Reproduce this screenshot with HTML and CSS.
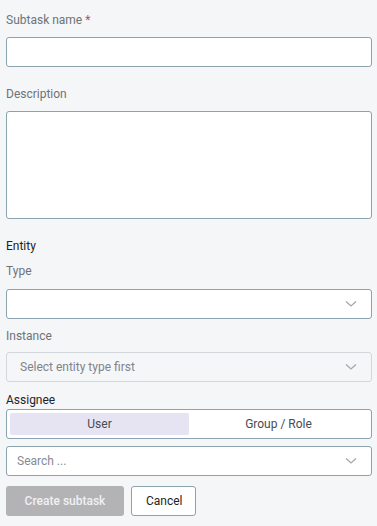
FILE: index.html
```html
<!DOCTYPE html>
<html>
<head>
<meta charset="utf-8">
<link rel="stylesheet" href="styles.css">
</head>
<body>
<form class="form">
  <label class="label first">Subtask name <span class="req">*</span></label>
  <div class="input"></div>

  <label class="label gap-lg">Description</label>
  <div class="textarea"></div>

  <div class="section">Entity</div>
  <label class="label sub">Type</label>
  <div class="input select">
    <span class="placeholder"></span>
    <svg class="chev" width="12" height="8" viewBox="0 0 12 8"><path d="M1 1.5 L6 6 L11 1.5" fill="none" stroke="#a3a8ad" stroke-width="1.3"/></svg>
  </div>

  <label class="label sub tight">Instance</label>
  <div class="input select disabled">
    <span class="placeholder">Select entity type first</span>
    <svg class="chev" width="12" height="8" viewBox="0 0 12 8"><path d="M1 1.5 L6 6 L11 1.5" fill="none" stroke="#a3a8ad" stroke-width="1.3"/></svg>
  </div>

  <div class="section assignee">Assignee</div>
  <div class="segmented">
    <div class="seg active">User</div>
    <div class="seg">Group / Role</div>
  </div>
  <div class="input select search">
    <span class="placeholder">Search ...</span>
    <svg class="chev" width="12" height="8" viewBox="0 0 12 8"><path d="M1 1.5 L6 6 L11 1.5" fill="none" stroke="#a3a8ad" stroke-width="1.3"/></svg>
  </div>

  <div class="actions">
    <button type="button" class="btn primary">Create subtask</button>
    <button type="button" class="btn secondary">Cancel</button>
  </div>
</form>
</body>
</html>
```
FILE: styles.css
```css
html, body {
  margin: 0;
  padding: 0;
  background: #f5f6f8;
}
body {
  font-family: Roboto, "Liberation Sans", sans-serif;
  font-size: 12px;
  color: #333;
}
.form {
  display: flex;
  flex-direction: column;
  padding: 12px 5px 0 6px;
}
.label {
  display: block;
  line-height: 16px;
  color: #6e7378;
  margin-bottom: 9px;
}
.label.gap-lg {
  margin-top: 19px;
}
.label.sub {
  margin-top: 9px;
  margin-bottom: 10px;
}
.label.sub.tight {
  margin-bottom: 8px;
}
.req {
  color: #c0504d;
}
.input {
  box-sizing: border-box;
  height: 30px;
  background: #fff;
  border: 1px solid #8aa3ae;
  border-radius: 3px;
}
.textarea {
  box-sizing: border-box;
  height: 108px;
  background: #fff;
  border: 1px solid #8aa3ae;
  border-radius: 3px;
}
.section {
  margin-top: 19px;
  line-height: 16px;
  color: #1f2328;
  font-weight: 400;
}
.select {
  display: flex;
  align-items: center;
  justify-content: space-between;
  padding: 0 14px 0 13px;
}
.placeholder {
  color: #868b92;
  font-size: 12px;
}
.chev {
  display: block;
}
.disabled {
  background: #f5f6f8;
  border-color: #d3d7db;
}
.disabled .placeholder {
  color: #7f848b;
}
.assignee {
  margin-top: 10px;
  margin-bottom: 1px;
}
.segmented {
  box-sizing: border-box;
  height: 30px;
  display: flex;
  padding: 3px;
  background: #fff;
  border: 1px solid #8aa3ae;
  border-radius: 3px;
}
.seg {
  flex: 1;
  display: flex;
  align-items: center;
  justify-content: center;
  color: #474c52;
  font-weight: 400;
  border-radius: 2px;
}
.seg.active {
  background: #e6e3f3;
}
.search {
  margin-top: 7px;
  padding-left: 10px;
}
.actions {
  display: flex;
  gap: 7px;
  margin-top: 10px;
}
.btn {
  box-sizing: border-box;
  height: 30px;
  font-family: inherit;
  font-size: 12px;
  font-weight: 400;
  border-radius: 3px;
  padding: 0 14px;
  cursor: pointer;
}
.btn.primary {
  width: 118px;
  background: #b3b3b6;
  border: none;
  color: #f0f0f2;
  font-weight: 500;
}
.btn.secondary {
  width: 65px;
  background: #fff;
  border: 1px solid #8aa3ae;
  color: #1f2328;
}
```
